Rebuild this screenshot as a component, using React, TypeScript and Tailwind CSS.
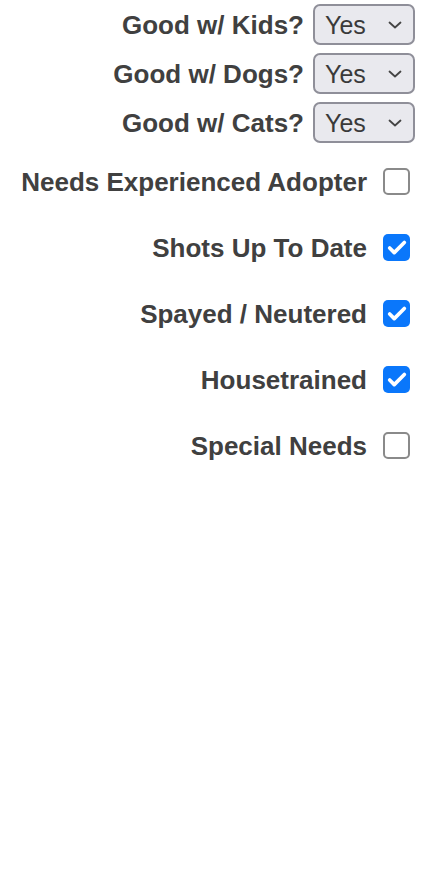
import { Check } from 'lucide-react';

const selects = ['Good w/ Kids?', 'Good w/ Dogs?', 'Good w/ Cats?'];

const checks = [
    { label: 'Needs Experienced Adopter', checked: false },
    { label: 'Shots Up To Date', checked: true },
    { label: 'Spayed / Neutered', checked: true },
    { label: 'Housetrained', checked: true },
    { label: 'Special Needs', checked: false },
];

function YesSelect() {
    return (
        <div className="relative h-[41px] w-[102px]">
            <select
                defaultValue="yes"
                className="h-full w-full appearance-none rounded-[7px] border-2 border-[#8f8f99] bg-[#e9e9ee] pl-[10px] pt-[1px] text-[25px] text-[#3a3a3a] outline-none"
            >
                <option value="yes">Yes</option>
                <option value="no">No</option>
            </select>
            <svg
                className="pointer-events-none absolute right-[13px] top-[17px] h-[8px] w-[14px]"
                viewBox="0 0 14 8"
                fill="none"
                stroke="#444"
                strokeWidth={1.8}
                strokeLinecap="round"
                strokeLinejoin="round"
            >
                <path d="M1.5 1.5 L7 6.5 L12.5 1.5" />
            </svg>
        </div>
    );
}

function Box({ checked }: { checked: boolean }) {
    if (checked) {
        return (
            <div className="flex h-[27px] w-[27px] items-center justify-center rounded-[5px] bg-[#0a77fb]">
                <Check className="h-[22px] w-[22px] text-white" strokeWidth={4} />
            </div>
        );
    }
    return <div className="h-[27px] w-[27px] rounded-[5px] border-2 border-[#8a8a8a] bg-white" />;
}

export default function App() {
    return (
        <div
            className="flex min-h-[878px] w-full flex-col bg-white pr-[21px] pt-[4px] text-[#404040]"
            style={{ fontFamily: '"Liberation Sans", Arial, sans-serif' }}
        >
            <div className="flex flex-col gap-[8px]">
                {selects.map((label) => (
                    <label key={label} className="flex items-center justify-end gap-[9px]">
                        <span className="text-[26px] font-bold leading-none">{label}</span>
                        <YesSelect />
                    </label>
                ))}
            </div>
            <div className="mt-[25px] flex flex-col gap-[39px] pr-[5px]">
                {checks.map((c) => (
                    <label key={c.label} className="flex items-center justify-end gap-[16px]">
                        <span className="text-[26px] font-bold leading-none">{c.label}</span>
                        <Box checked={c.checked} />
                    </label>
                ))}
            </div>
        </div>
    );
}
